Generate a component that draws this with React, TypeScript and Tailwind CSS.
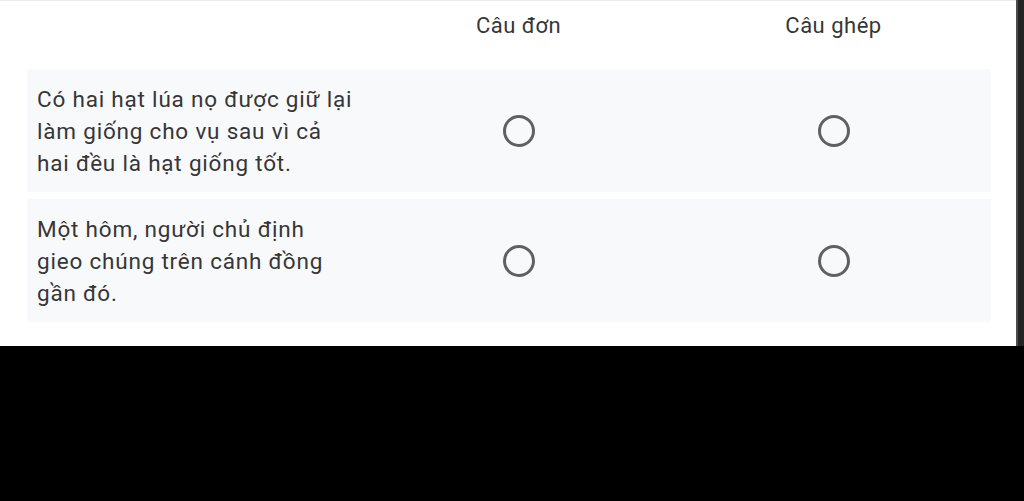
const rows = [
  ["Có hai hạt lúa nọ được giữ lại", "làm giống cho vụ sau vì cả", "hai đều là hạt giống tốt."],
  ["Một hôm, người chủ định", "gieo chúng trên cánh đồng", "gần đó."],
]

function Radio() {
  return <div className="h-[32px] w-[32px] rounded-full border-[3px] border-[#5f6062]" />
}

export default function App() {
  return (
    <div className="flex h-[501px] w-[1024px] flex-col bg-black font-['Roboto',sans-serif]">
      <div className="flex h-[346px]">
        <div className="flex-1 border-t border-[#ececec] bg-white pl-[27px] pr-[25px]">
          <div className="grid h-[68px] grid-cols-[334px_315px_315px] pt-[10px] text-[22px] leading-[30px] tracking-[0.5px] text-[#363636]">
            <div />
            <div className="text-center">Câu đơn</div>
            <div className="text-center">Câu ghép</div>
          </div>
          <div className="flex flex-col gap-[7px]">
            {rows.map((lines, i) => (
              <div
                key={i}
                className="grid h-[123px] grid-cols-[334px_315px_315px] items-center bg-[#f8f9fa]"
              >
                <div className="pl-[10px] text-[22.5px] leading-[32px] tracking-[0.8px] text-[#363636]">
                  {lines.map((l) => (
                    <div key={l} className="whitespace-nowrap">{l}</div>
                  ))}
                </div>
                <div className="flex justify-center">
                  <Radio />
                </div>
                <div className="flex justify-center">
                  <Radio />
                </div>
              </div>
            ))}
          </div>
        </div>
        <div className="w-[8px] border-l-2 border-[#4d4d4d] bg-[#242424]" />
      </div>
    </div>
  )
}
